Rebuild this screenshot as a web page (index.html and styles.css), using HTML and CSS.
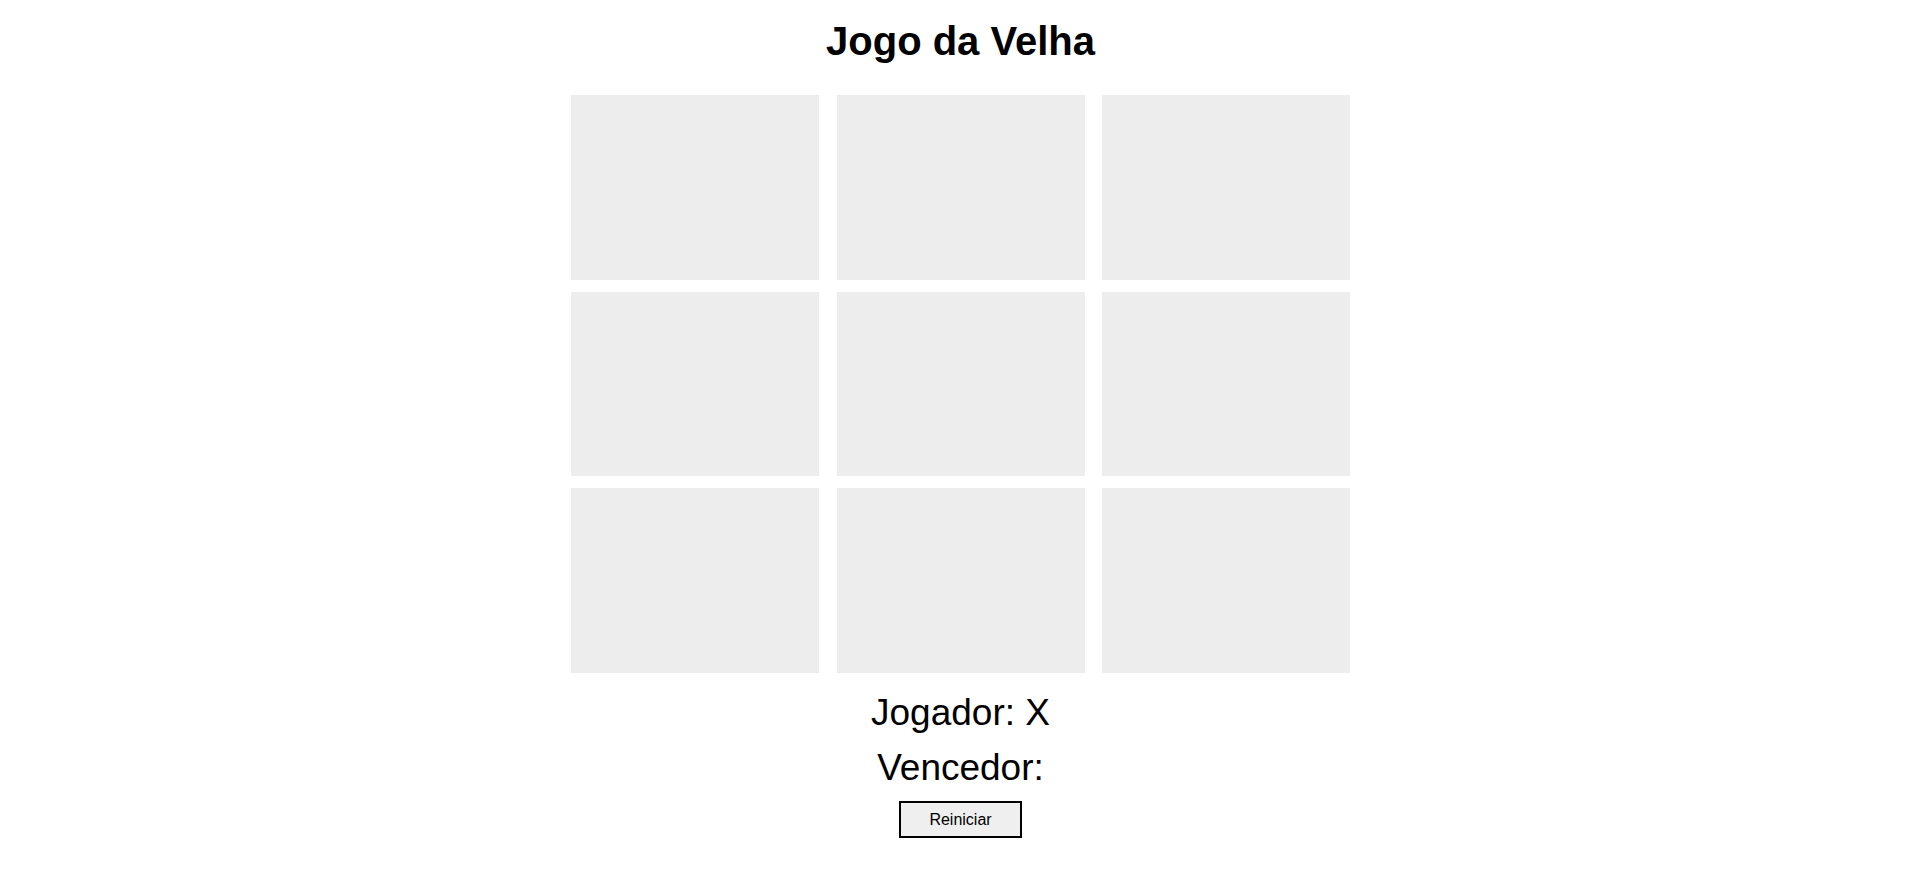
FILE: index.html
```html
<!DOCTYPE html>
<html lang="pt">
<head>
<meta charset="utf-8">
<title>Jogo da Velha</title>
<link rel="stylesheet" href="styles.css">
</head>
<body>
<main class="app">
  <h1 class="title">Jogo da Velha</h1>
  <div class="board">
    <div class="cell"></div>
    <div class="cell"></div>
    <div class="cell"></div>
    <div class="cell"></div>
    <div class="cell"></div>
    <div class="cell"></div>
    <div class="cell"></div>
    <div class="cell"></div>
    <div class="cell"></div>
  </div>
  <div class="status">
    <p class="line">Jogador: X</p>
    <p class="line">Vencedor: </p>
  </div>
  <button class="reset" type="button">Reiniciar</button>
</main>
</body>
</html>
```

FILE: styles.css
```css
html, body {
  margin: 0;
  padding: 0;
  background: #ffffff;
  color: #000000;
  font-family: "Liberation Sans", Arial, sans-serif;
}

.app {
  display: flex;
  flex-direction: column;
  align-items: center;
  padding-top: 19px;
  padding-left: 2px;
}

.title {
  margin: 0;
  font-size: 40px;
  line-height: 45px;
  font-weight: bold;
}

.board {
  margin-top: 31px;
  display: grid;
  grid-template-columns: repeat(3, 248px);
  grid-auto-rows: 184.5px;
  column-gap: 17.5px;
  row-gap: 12px;
}

.cell {
  background: #ededed;
}

.status {
  margin-top: 19.5px;
  display: flex;
  flex-direction: column;
  align-items: center;
  gap: 14px;
}

.line {
  margin: 0;
  font-size: 37px;
  line-height: 41px;
}

.reset {
  margin-top: 13px;
  font-family: "Liberation Sans", Arial, sans-serif;
  font-size: 16px;
  line-height: 18px;
  padding: 7.5px 28px;
  background: #efefef;
  border: 2px solid #000000;
  border-radius: 0;
  color: #000000;
}
```
